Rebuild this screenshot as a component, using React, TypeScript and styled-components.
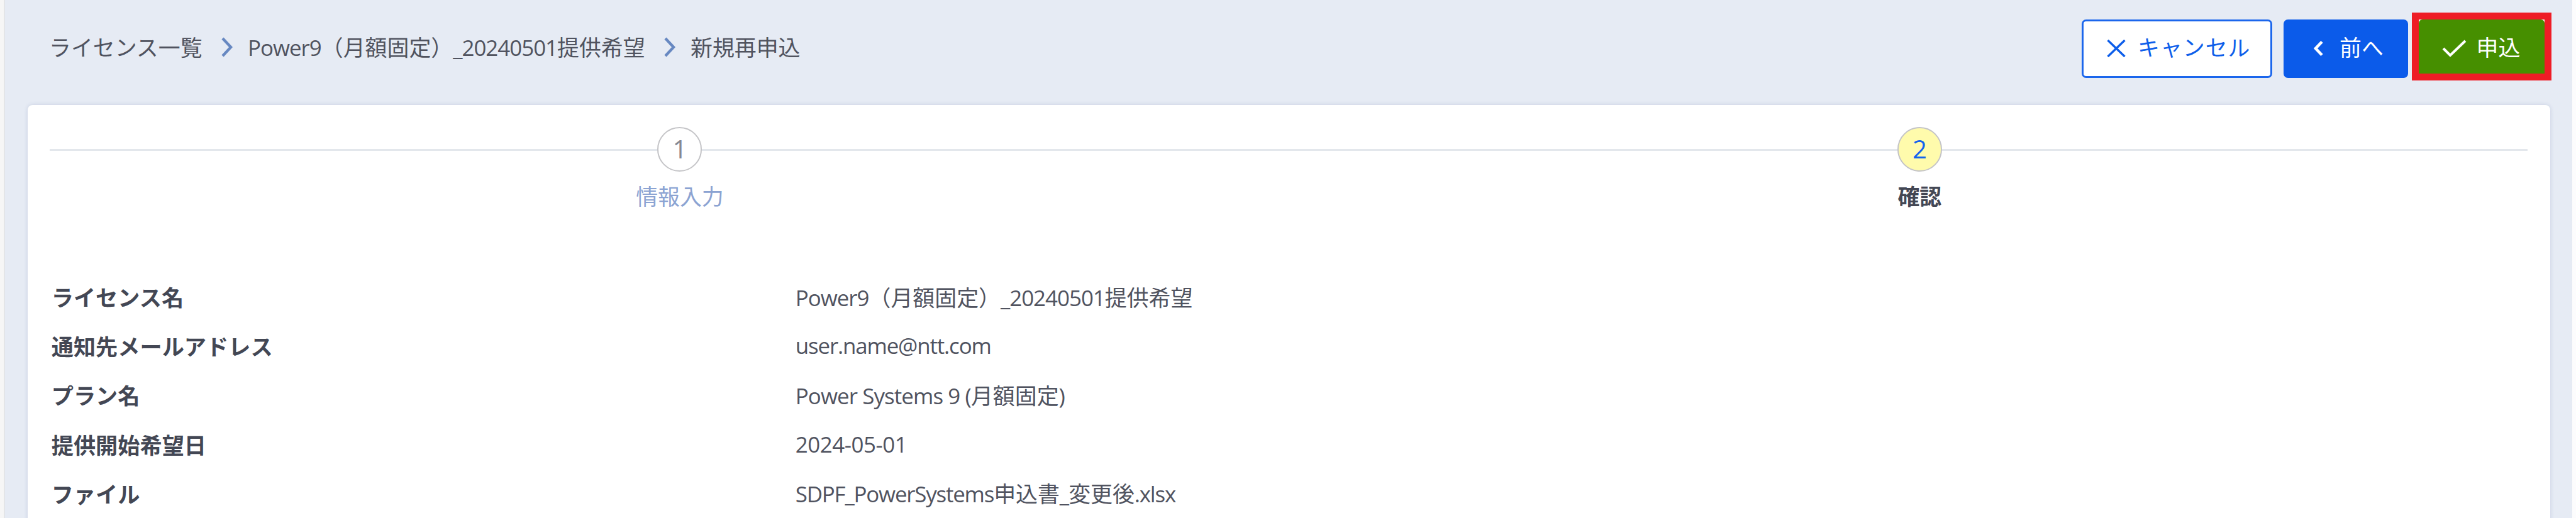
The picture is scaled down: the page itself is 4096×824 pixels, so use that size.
import { Fragment } from 'react'
import styled, { createGlobalStyle } from 'styled-components'

const GlobalStyle = createGlobalStyle`
  * {
    box-sizing: border-box;
  }

  body {
    margin: 0;
    overflow: hidden;
    color: #50535f;
    font-family: 'Open Sans', 'Noto Sans CJK JP', sans-serif;
    font-size: 34.9px;
  }
`

const Page = styled.div`
  height: 824px;
  padding: 0 35.5px 0 37.75px;
  border-left: 6px solid #f6f6f6;
  border-right: 6px solid #fcfcfd;
  background: #e6ebf4;
  box-shadow: inset 2px 0 0 #e3e5e8;
  overflow: hidden;
`

const Header = styled.header`
  display: flex;
  justify-content: space-between;
  align-items: flex-start;
  height: 167px;
  padding: 19.5px 0 0 34.25px;
`

const Breadcrumb = styled.nav`
  display: flex;
  align-items: center;
  height: 108px;
`

const Crumb = styled.span<{ $width?: number }>`
  width: ${({ $width }) => ($width ? `${$width}px` : 'auto')};
  white-space: nowrap;
`

const Separator = styled.svg`
  width: 18px;
  height: 32px;
  margin: 2px 24.5px 0 0;
  fill: none;
  stroke: #6788c1;
  stroke-width: 4.4;
`

const Latin = styled.span<{ $spacing?: number }>`
  letter-spacing: ${({ $spacing = -1 }) => $spacing}px;
`

const Actions = styled.div`
  display: flex;
  align-items: flex-start;
  margin-right: -2.5px;
`

const Button = styled.button<{ $width: number; $left: number; $primary?: boolean }>`
  display: flex;
  align-items: center;
  width: ${({ $width }) => $width}px;
  height: 93px;
  margin: 11px 18px 0 0;
  padding: 0 0 0 ${({ $left }) => $left}px;
  border: 3px solid #0d5eea;
  border-color: ${({ $primary }) => ($primary ? '#0b5bea' : '#1b66ec')};
  border-radius: 7px;
  background: ${({ $primary }) => ($primary ? '#0b5bea' : '#fff')};
  color: ${({ $primary }) => ($primary ? '#fff' : '#0d5eea')};
  font: inherit;
  white-space: nowrap;

  & + & {
    margin-right: 6px;
  }
`

const ButtonLabel = styled.span<{ $spacing?: number }>`
  padding-bottom: 6px;
  letter-spacing: ${({ $spacing = 0 }) => $spacing}px;
`

const Highlight = styled.div`
  width: 222.5px;
  height: 108px;
  border: 11px solid #ee1c25;
  background: #fff;
`

const SubmitButton = styled.button`
  display: flex;
  align-items: center;
  width: 100%;
  height: 100%;
  padding: 7px 0 0 37px;
  border: 0;
  border-radius: 6px 6px 0 0;
  background: #468f00;
  color: #fff;
  font: inherit;
  white-space: nowrap;
`

const ButtonIcon = styled.svg<{ $gap: number }>`
  flex: none;
  margin-right: ${({ $gap }) => $gap}px;
  fill: none;
  stroke: currentColor;
`

const Panel = styled.main`
  height: 700px;
  border-radius: 8px;
  background: #fff;
  box-shadow: 0 0 6px rgba(70, 90, 150, 0.2);
`

const Steps = styled.ol`
  position: relative;
  display: grid;
  grid-template-columns: 1fr 1fr;
  margin: 0;
  padding: 34.5px 16.5px 0 51.5px;
  list-style: none;

  &::before {
    content: '';
    position: absolute;
    top: 70px;
    left: 35.5px;
    right: 35.5px;
    height: 3px;
    background: #e3e7ec;
  }
`

const Step = styled.li<{ $active?: boolean }>`
  position: relative;
  display: flex;
  flex-direction: column;
  align-items: center;
  color: ${({ $active }) => ($active ? '#434754' : '#8ba3d2')};
  font-weight: ${({ $active }) => ($active ? 700 : 400)};
`

const StepNumber = styled.span<{ $active?: boolean }>`
  display: flex;
  align-items: center;
  justify-content: center;
  width: 71px;
  height: 71px;
  margin-bottom: 15px;
  border: 2px solid #c4c4c7;
  border-radius: 50%;
  background: ${({ $active }) => ($active ? '#fffbac' : '#fff')};
  color: ${({ $active }) => ($active ? '#1463ee' : '#858892')};
  font-size: 40px;
  font-weight: 400;
  line-height: 1;
`

const StepLabel = styled.span`
  line-height: 50px;
`

const Details = styled.dl`
  display: grid;
  grid-template-columns: 1183px 1fr;
  grid-auto-rows: 78.2px;
  align-items: center;
  margin: 95px 0 0;
  padding-left: 38px;
`

const Term = styled.dt`
  color: #434754;
  font-size: 35.2px;
  font-weight: 700;
`

const Value = styled.dd`
  margin: 0;
  white-space: nowrap;
`

const licenseName = (
  <>
    <Latin>Power9</Latin>（月額固定）<Latin>_20240501</Latin>提供希望
  </>
)

const crumbs = [
  { label: 'ライセンス一覧', width: 273.5 },
  { label: licenseName, width: 661.5 },
  { label: '新規再申込' },
]

const details = [
  { term: 'ライセンス名', value: licenseName },
  { term: '通知先メールアドレス', value: <Latin $spacing={-1.15}>user.name@ntt.com</Latin> },
  {
    term: 'プラン名',
    value: (
      <>
        <Latin $spacing={-0.9}>Power Systems 9 (</Latin>月額固定<Latin>)</Latin>
      </>
    ),
  },
  { term: '提供開始希望日', value: <Latin $spacing={-0.45}>2024-05-01</Latin> },
  {
    term: 'ファイル',
    value: (
      <>
        <Latin $spacing={-1.2}>SDPF_PowerSystems</Latin>申込書<Latin>_</Latin>変更後
        <Latin $spacing={-1.2}>.xlsx</Latin>
      </>
    ),
  },
]

const App: React.FC = () => (
  <>
    <GlobalStyle />
    <Page>
      <Header>
        <Breadcrumb>
          {crumbs.map(({ label, width }, i) => (
            <Fragment key={i}>
              {i > 0 && (
                <Separator viewBox="0 0 18 32">
                  <path d="M2 2 15 16 2 30" />
                </Separator>
              )}
              <Crumb $width={width}>{label}</Crumb>
            </Fragment>
          ))}
        </Breadcrumb>
        <Actions>
          <Button $width={302.5} $left={37}>
            <ButtonIcon $gap={19} width="30" height="28" viewBox="0 0 30 28" strokeWidth="3.4">
              <path d="M1.5 1 28.5 27M28.5 1 1.5 27" />
            </ButtonIcon>
            <ButtonLabel $spacing={1}>キャンセル</ButtonLabel>
          </Button>
          <Button $width={198} $left={44} $primary>
            <ButtonIcon $gap={26.5} width="16" height="24" viewBox="0 0 16 24" strokeWidth="4.6">
              <path d="M14 1.5 4 12l10 10.5" />
            </ButtonIcon>
            <ButtonLabel>前へ</ButtonLabel>
          </Button>
          <Highlight>
            <SubmitButton>
              <ButtonIcon $gap={16} width="39" height="28" viewBox="0 0 39 28" strokeWidth="4">
                <path d="M2 14l11 11L37 2" />
              </ButtonIcon>
              <ButtonLabel>申込</ButtonLabel>
            </SubmitButton>
          </Highlight>
        </Actions>
      </Header>
      <Panel>
        <Steps>
          <Step>
            <StepNumber>1</StepNumber>
            <StepLabel>情報入力</StepLabel>
          </Step>
          <Step $active>
            <StepNumber $active>2</StepNumber>
            <StepLabel>確認</StepLabel>
          </Step>
        </Steps>
        <Details>
          {details.map(({ term, value }) => (
            <Fragment key={term}>
              <Term>{term}</Term>
              <Value>{value}</Value>
            </Fragment>
          ))}
        </Details>
      </Panel>
    </Page>
  </>
)

export default App
